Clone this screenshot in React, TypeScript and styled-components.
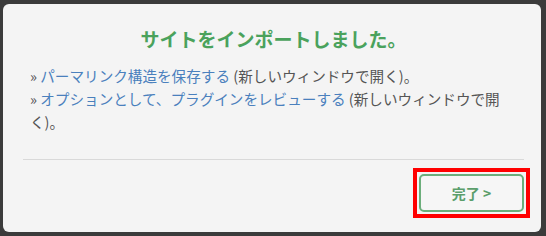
import React from "react";
import styled, { createGlobalStyle } from "styled-components";

const Global = createGlobalStyle`
  html, body { margin: 0; padding: 0; background: #3b3b3b; }
  body { font-family: "Noto Sans CJK JP", "Noto Sans", sans-serif; }
  * { box-sizing: border-box; }
`;

const Backdrop = styled.div`
  width: 546px;
  height: 236px;
  padding: 4px 5px 4px 3px;
  background: #3b3b3b;
`;

const Dialog = styled.div`
  height: 228px;
  background: #f4f4f4;
  border-radius: 6px;
  padding: 0 17px 0 20px;
  display: flex;
  flex-direction: column;
`;

const Title = styled.h2`
  margin: 0;
  padding-top: 22px;
  font-size: 19px;
  line-height: 26px;
  font-weight: 700;
  text-align: center;
  color: #4aa25c;
`;

const Body = styled.div`
  margin-top: 12px;
  padding: 0 12px 0 7px;
  font-size: 14.6px;
  line-height: 23px;
  color: #555;
`;

const Line = styled.div``;

const Link = styled.a`
  color: #4a80bd;
  text-decoration: none;
`;

const Divider = styled.hr`
  margin: 26px 0 0;
  border: 0;
  border-top: 1px solid #d9d9d9;
  height: 0;
`;

const Footer = styled.div`
  display: flex;
  justify-content: flex-end;
  padding-top: 8px;
`;

const Highlight = styled.div`
  border: 4px solid #ff0000;
  padding: 2px;
  margin-right: -6px;
`;

const Button = styled.button`
  display: block;
  width: 105px;
  height: 38px;
  border: 2px solid #6cae7b;
  border-radius: 5px;
  background: #f6f6f6;
  color: #5b9e6b;
  font-family: "Noto Sans CJK JP", "Noto Sans", sans-serif;
  font-size: 14px;
  font-weight: 700;
  cursor: pointer;
`;

export default function App() {
  return (
    <>
      <Global />
      <Backdrop>
        <Dialog>
          <Title>サイトをインポートしました。</Title>
          <Body>
            <Line>
              » <Link href="#">パーマリンク構造を保存する</Link> (新しいウィンドウで開く)。
            </Line>
            <Line>
              » <Link href="#">オプションとして、プラグインをレビューする</Link> (新しいウィンドウで開く)。
            </Line>
          </Body>
          <Divider />
          <Footer>
            <Highlight>
              <Button>完了 &gt;</Button>
            </Highlight>
          </Footer>
        </Dialog>
      </Backdrop>
    </>
  );
}
